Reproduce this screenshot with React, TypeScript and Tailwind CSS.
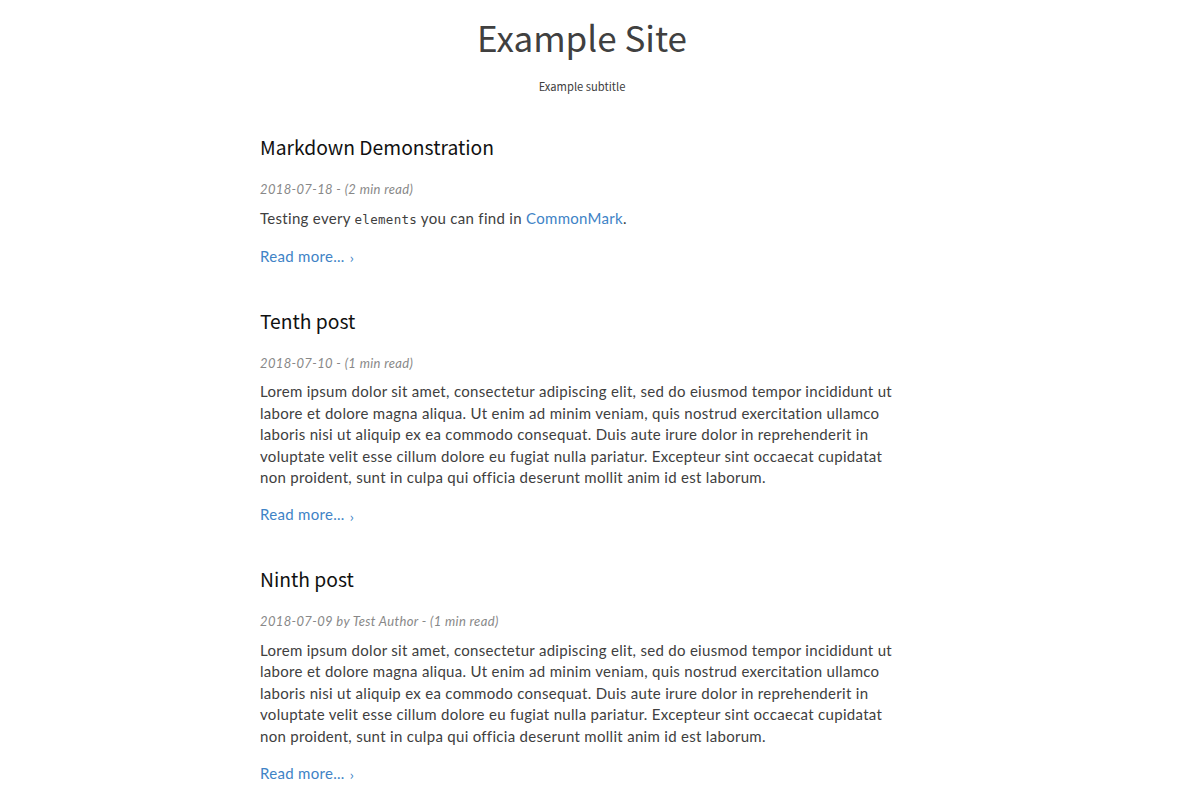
import React from 'react';

const lorem =
  'Lorem ipsum dolor sit amet, consectetur adipiscing elit, sed do eiusmod tempor incididunt ut labore et dolore magna aliqua. Ut enim ad minim veniam, quis nostrud exercitation ullamco laboris nisi ut aliquip ex ea commodo consequat. Duis aute irure dolor in reprehenderit in voluptate velit esse cillum dolore eu fugiat nulla pariatur. Excepteur sint occaecat cupidatat non proident, sunt in culpa qui officia deserunt mollit anim id est laborum.';

function ReadMore() {
  return (
    <a href="#" className="inline-flex items-center gap-[5px] font-['Lato','Noto_Sans',sans-serif] text-[15px] tracking-[0.3px] text-[#4083c6]">
      Read more...
      <span className="mt-[3px] font-['Noto_Sans_CJK_JP',sans-serif] text-[13px] leading-none">›</span>
    </a>
  );
}

function Post({ title, meta, children }: { title: string; meta: string; children: React.ReactNode }) {
  return (
    <article className="mb-[38px]">
      <h2 className="font-['Noto_Sans_CJK_JP','Noto_Sans',sans-serif] text-[19.3px] leading-[30px] text-[#111]">
        {title}
      </h2>
      <p className="mt-[18px] font-['Lato','Noto_Sans',sans-serif] text-[13px] italic tracking-[0.35px] text-[#888]">
        {meta}
      </p>
      <div className="mt-[8px] font-['Lato','Noto_Sans',sans-serif] text-[15px] leading-[21.4px] tracking-[0.3px] text-[#404040]">
        {children}
      </div>
      <div className="mt-[14px]">
        <ReadMore />
      </div>
    </article>
  );
}

export default function App() {
  return (
    <div className="min-h-screen bg-white">
      <div className="ml-[260px] w-[644px]">
        <header className="pt-[15px] text-center font-['Noto_Sans_CJK_JP','Noto_Sans',sans-serif] text-[#404040]">
          <h1 className="text-[35px] leading-[44px]">Example Site</h1>
          <p className="mt-[17px] text-[11.2px] leading-[20px]">Example subtitle</p>
        </header>
        <main className="mt-[36px]">
          <Post title="Markdown Demonstration" meta="2018-07-18 - (2 min read)">
            Testing every <code className="font-['DejaVu_Sans_Mono',monospace] text-[12.5px]">elements</code> you can find in{' '}
            <a href="#" className="text-[#4083c6]">CommonMark</a>.
          </Post>
          <Post title="Tenth post" meta="2018-07-10 - (1 min read)">
            {lorem}
          </Post>
          <Post title="Ninth post" meta="2018-07-09 by Test Author - (1 min read)">
            {lorem}
          </Post>
        </main>
      </div>
    </div>
  );
}
